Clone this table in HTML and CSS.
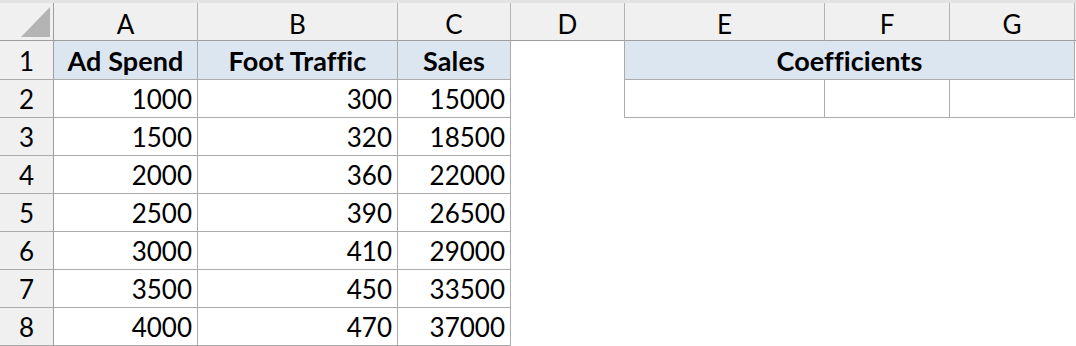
FILE: index.html
```html
<!DOCTYPE html>
<html>
<head>
<meta charset="utf-8">
<link rel="stylesheet" href="styles.css">
</head>
<body>
<div class="topstrip"></div>
<div class="sheet">
  <div class="corner"><svg width="53" height="37" viewBox="0 0 53 37"><polygon points="21,34 50,34 50,4" fill="#b4b4b4"/></svg></div>
  <div class="ch">A</div>
  <div class="ch">B</div>
  <div class="ch">C</div>
  <div class="ch">D</div>
  <div class="ch">E</div>
  <div class="ch">F</div>
  <div class="ch">G</div>
  <div class="ch last"></div>

  <div class="rh first">1</div>
  <div class="c hd">Ad Spend</div>
  <div class="c hd">Foot Traffic</div>
  <div class="c hd">Sales</div>
  <div class="e edge"></div>
  <div class="c hd span3">Coefficients</div>
  <div class="e"></div>

  <div class="rh">2</div>
  <div class="c n">1000</div>
  <div class="c n">300</div>
  <div class="c n">15000</div>
  <div class="e edge"></div>
  <div class="c"></div>
  <div class="c"></div>
  <div class="c"></div>
  <div class="e"></div>

  <div class="rh">3</div>
  <div class="c n">1500</div>
  <div class="c n">320</div>
  <div class="c n">18500</div>
  <div class="e wide"></div>

  <div class="rh">4</div>
  <div class="c n">2000</div>
  <div class="c n">360</div>
  <div class="c n">22000</div>
  <div class="e wide"></div>

  <div class="rh">5</div>
  <div class="c n">2500</div>
  <div class="c n">390</div>
  <div class="c n">26500</div>
  <div class="e wide"></div>

  <div class="rh">6</div>
  <div class="c n">3000</div>
  <div class="c n">410</div>
  <div class="c n">29000</div>
  <div class="e wide"></div>

  <div class="rh">7</div>
  <div class="c n">3500</div>
  <div class="c n">450</div>
  <div class="c n">33500</div>
  <div class="e wide"></div>

  <div class="rh">8</div>
  <div class="c n">4000</div>
  <div class="c n">470</div>
  <div class="c n">37000</div>
  <div class="e wide"></div>
</div>
</body>
</html>
```

FILE: styles.css
```css
* { box-sizing: border-box; }
html, body { margin: 0; padding: 0; background: #ffffff; }
body {
  font-family: Lato, "Open Sans", sans-serif;
  font-size: 26px;
  color: #000;
  overflow: hidden;
  font-variant-ligatures: none;
}
.topstrip { height: 3px; background: #e3e3e3; }
.sheet {
  display: grid;
  grid-template-columns: 54px 144px 200px 113px 114px 200px 125px 125px 1fr;
  grid-template-rows: 38px 39px repeat(7, 38px);
}
.corner {
  background: #f0f0f0;
  border-right: 1px solid #9e9e9e;
  border-bottom: 1px solid #9e9e9e;
  display: flex;
}
.corner svg { display: block; }
.ch {
  background: #f0f0f0;
  border-right: 1px solid #b4b4b4;
  border-bottom: 1px solid #9e9e9e;
  display: flex;
  align-items: center;
  justify-content: center;
  padding-top: 4px;
}
.ch.last { border-right: none; }
.rh {
  background: #f0f0f0;
  border-right: 1px solid #9e9e9e;
  border-bottom: 1px solid #ababab;
  display: flex;
  align-items: center;
  justify-content: center;
  padding-top: 1px;
}
.c {
  border-right: 1px solid #ababab;
  border-bottom: 1px solid #ababab;
  display: flex;
  align-items: center;
  padding-top: 1px;
}
.hd {
  background: #dce6f1;
  font-weight: 700;
  font-size: 27px;
  letter-spacing: 0.1px;
  justify-content: center;
}
.n { justify-content: flex-end; padding-right: 5px; }
.span3 { grid-column: span 3; }
.e { background: #fff; }
.edge { border-right: 1px solid #ababab; }
.wide { grid-column: span 5; }
```
